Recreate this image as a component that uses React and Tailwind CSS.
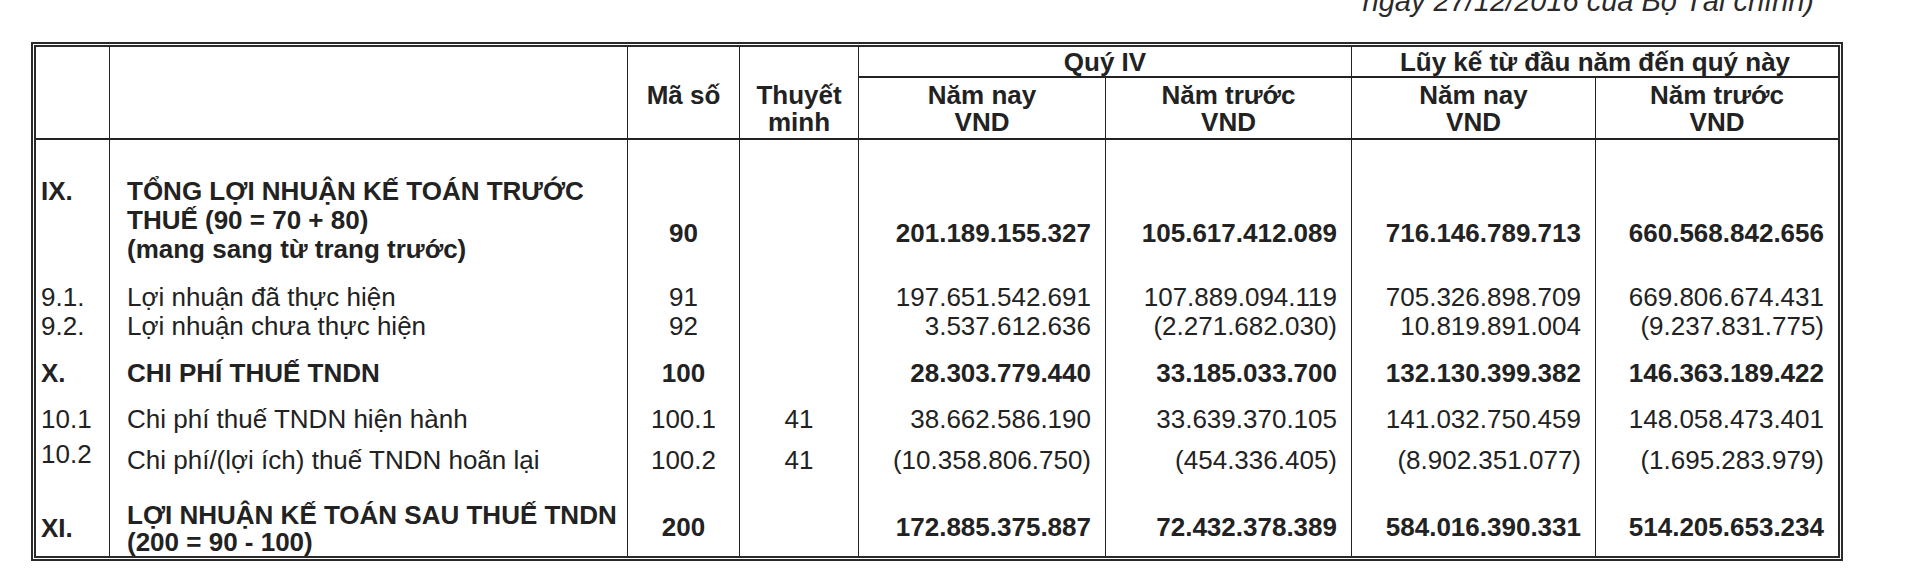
import React from 'react'

const rows = [
  {
    h: 'h-[143px]', bold: true, label: 'IX.', lp: 'pt-[37px]', dp: 'pt-[37px]', vp: 'pt-[79px]', dl: 'leading-[29px]',
    desc: ['TỔNG LỢI NHUẬN KẾ TOÁN TRƯỚC', 'THUẾ (90 = 70 + 80)', '(mang sang từ trang trước)'],
    code: '90', note: '',
    values: ['201.189.155.327', '105.617.412.089', '716.146.789.713', '660.568.842.656'],
  },
  {
    h: 'h-[29px]', bold: false, label: '9.1.', lp: 'pt-0', dp: 'pt-0', vp: 'pt-0', dl: 'leading-[29px]',
    desc: ['Lợi nhuận đã thực hiện'], code: '91', note: '',
    values: ['197.651.542.691', '107.889.094.119', '705.326.898.709', '669.806.674.431'],
  },
  {
    h: 'h-[29px]', bold: false, label: '9.2.', lp: 'pt-0', dp: 'pt-0', vp: 'pt-0', dl: 'leading-[29px]',
    desc: ['Lợi nhuận chưa thực hiện'], code: '92', note: '',
    values: ['3.537.612.636', '(2.271.682.030)', '10.819.891.004', '(9.237.831.775)'],
  },
  {
    h: 'h-[47px]', bold: true, label: 'X.', lp: 'pt-[18px]', dp: 'pt-[18px]', vp: 'pt-[18px]', dl: 'leading-[29px]',
    desc: ['CHI PHÍ THUẾ TNDN'], code: '100', note: '',
    values: ['28.303.779.440', '33.185.033.700', '132.130.399.382', '146.363.189.422'],
  },
  {
    h: 'h-[46px]', bold: false, label: '10.1', lp: 'pt-[17px]', dp: 'pt-[17px]', vp: 'pt-[17px]', dl: 'leading-[29px]',
    desc: ['Chi phí thuế TNDN hiện hành'], code: '100.1', note: '41',
    values: ['38.662.586.190', '33.639.370.105', '141.032.750.459', '148.058.473.401'],
  },
  {
    h: 'h-[37px]', bold: false, label: '10.2', lp: 'pt-[6px]', dp: 'pt-[12px]', vp: 'pt-[12px]', dl: 'leading-[29px]',
    desc: ['Chi phí/(lợi ích) thuế TNDN hoãn lại'], code: '100.2', note: '41',
    values: ['(10.358.806.750)', '(454.336.405)', '(8.902.351.077)', '(1.695.283.979)'],
  },
  {
    h: 'h-[85px]', bold: true, label: 'XI.', lp: 'pt-[43px]', dp: 'pt-[31px]', vp: 'pt-[42px]', dl: 'leading-[27px]',
    desc: ['LỢI NHUẬN KẾ TOÁN SAU THUẾ TNDN', '(200 = 90 - 100)'], code: '200', note: '',
    values: ['172.885.375.887', '72.432.378.389', '584.016.390.331', '514.205.653.234'],
  },
]

function Row({ row }) {
  return (
    <div className={`grid grid-cols-[74px_518px_112px_119px_247px_246px_244px_242px] leading-[29px] ${row.h} ${row.bold ? 'font-bold' : 'font-normal'}`}>
      <div className={`border-r border-[#222] pl-[5px] ${row.lp}`}>{row.label}</div>
      <div className={`border-r border-[#222] pl-[17px] ${row.dp} ${row.dl}`}>
        {row.desc.map((d) => <div key={d} className="whitespace-nowrap">{d}</div>)}
      </div>
      <div className={`border-r border-[#222] text-center ${row.vp}`}>{row.code}</div>
      <div className={`border-r border-[#222] text-center ${row.vp}`}>{row.note}</div>
      {row.values.map((v, i) => (
        <div key={i} className={`text-right pr-[14px] whitespace-nowrap ${i < 3 ? 'border-r border-[#222]' : ''} ${row.vp}`}>{v}</div>
      ))}
    </div>
  )
}

export default function App() {
  return (
    <div className="w-[1922px] h-[580px] overflow-hidden bg-white text-[#222] font-['Liberation_Sans',Arial,sans-serif] text-[26px]">
      {/* cut-off line of the page heading */}
      <div className="-mt-[14px] h-[28px] flex justify-end pr-[108px]">
        <p className="italic text-[29px] leading-[30px] text-[#2a2a2a] whitespace-nowrap">ngày 27/12/2016 của Bộ Tài chính)</p>
      </div>

      <div className="ml-[31px] mt-[28px] w-[1812px] border-[5px] border-double border-[#2a2a2a]">
        {/* Header */}
        <div className="grid grid-cols-[74px_518px_112px_119px_247px_246px_244px_242px] border-b-2 border-[#222] font-bold">
          <div className="row-span-2 border-r border-[#222]" />
          <div className="row-span-2 border-r border-[#222]" />
          <div className="row-span-2 border-r border-[#222] pt-[35px] text-center leading-[27px]">Mã số</div>
          <div className="row-span-2 border-r border-[#222] pt-[35px] text-center leading-[27px]">Thuyết<br />minh</div>
          <div className="col-span-2 h-[31px] border-r border-b-2 border-[#222] text-center leading-[31px]">Quý IV</div>
          <div className="col-span-2 h-[31px] border-b-2 border-[#222] text-center leading-[31px]">Lũy kế từ đầu năm đến quý này</div>
          <div className="h-[60px] border-r border-[#222] pt-[4px] text-center leading-[27px]">Năm nay<br />VND</div>
          <div className="h-[60px] border-r border-[#222] pt-[4px] text-center leading-[27px]">Năm trước<br />VND</div>
          <div className="h-[60px] border-r border-[#222] pt-[4px] text-center leading-[27px]">Năm nay<br />VND</div>
          <div className="h-[60px] pt-[4px] text-center leading-[27px]">Năm trước<br />VND</div>
        </div>

        {/* Body */}
        {rows.map((r) => <Row key={r.label} row={r} />)}
      </div>
    </div>
  )
}
